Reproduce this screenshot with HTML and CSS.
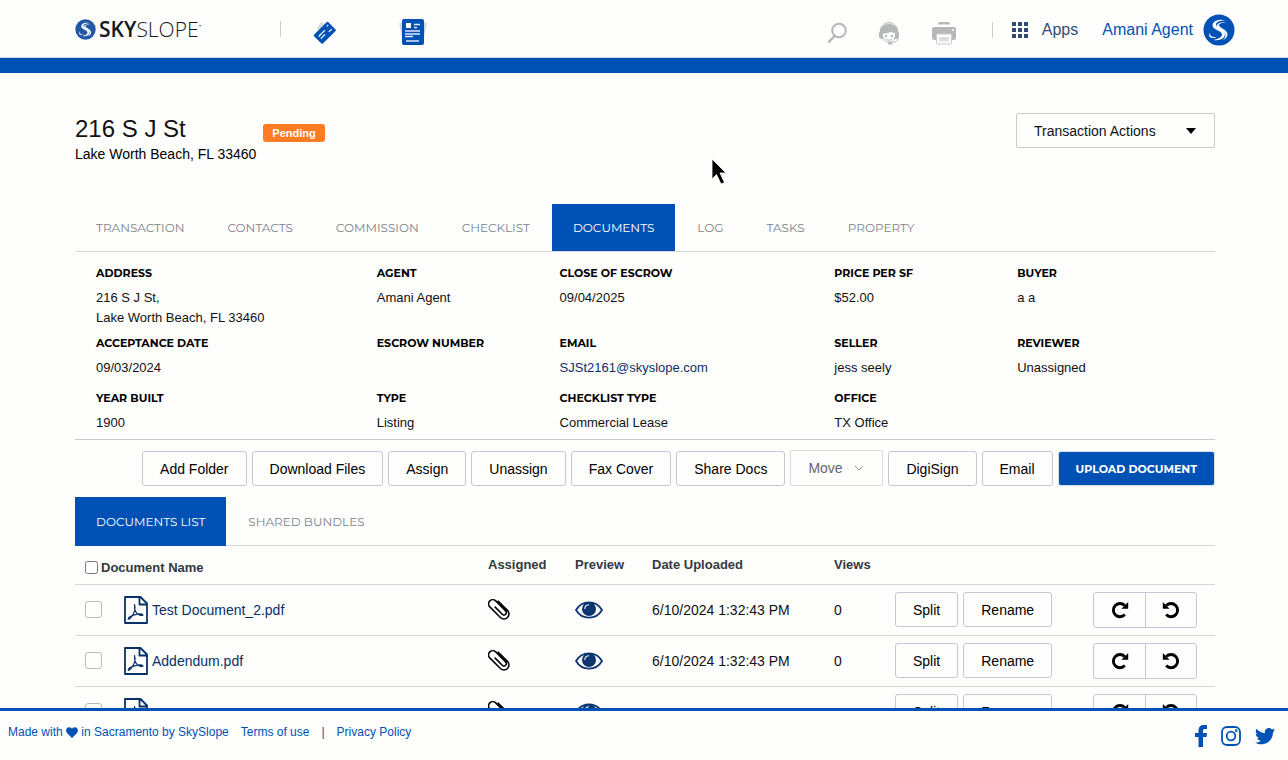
FILE: index.html
```html
<!DOCTYPE html>
<html lang="en">
<head>
    <meta charset="UTF-8">
    <meta name="viewport" content="width=device-width, initial-scale=1.0">
    <title>SkySlope - 216 S J St</title>
    <link rel="stylesheet" href="styles.css">
</head>
<body>
    <!-- Shared icons -->
    <svg class="sprite" aria-hidden="true">
        <symbol id="logo" viewBox="0 0 32 32">
            <circle cx="16" cy="16" r="15.5" fill="currentColor"/>
            <path d="M22.5 6.5C16 4.500 9.500 7 9.500 11.500c0 4.500 9.500 5 9.500 9 0 2.500-3.500 4.500-8.500 5.500 6.500 1 11.500-1.500 11.500-6 0-5-8.500-5.500-9-9.500-.2-2.500 4-4.200 9.500-4z" fill="#fff"/>
            <path d="M23.500 8.500c-4 0-7.500.8-7.500 2.700 0 2.300 8.500 4.300 8.500 9.300 0 2.500-2 4.500-4.500 5.500 1.500-1.500 2.500-3 2.500-5 0-4.500-8.500-5.500-8.500-9.300 0-2.700 5-4.200 9.500-3.200z" fill="#fff"/>
            <path d="M7 18.500c-.5 3 1.500 5 6.500 4.500-2 1.200-6 1.500-7-.5-.6-1.300-.3-2.700.5-4z" fill="#fff"/>
        </symbol>
        <symbol id="pdf" viewBox="0 0 24 28">
            <path d="M1 1h15.500L23 7.500V27H1zM15.500 1v7.500H23" fill="none" stroke="currentColor" stroke-width="1.800" stroke-linejoin="round"/>
            <path d="M10.500 8.500c1 3.500.3 7-1.500 10-1.500 2.700-3.500 5-4.800 4.600.2-1.600 3-3.400 6.300-4.300 3.500-1 7.500-1.300 8.500.2-2 1.200-5.500-.5-7-2.800-1.300-2-1.800-4.500-1.500-7.700z" fill="none" stroke="currentColor" stroke-width="1.200" stroke-linejoin="round"/>
        </symbol>
        <symbol id="clip" viewBox="0 0 22 24">
            <g transform="translate(11 11) rotate(-45)" fill="none" stroke="currentColor" stroke-width="1.600" stroke-linecap="round">
                <path d="M5-6V7a5 5 0 0 1-10 0V-8a4.200 4.200 0 0 1 8.400 0V6a2.400 2.400 0 0 1-4.800 0V-4"/>
            </g>
        </symbol>
        <symbol id="eye" viewBox="0 0 28 18">
            <path d="M1 9C7 -1.200 21-1.200 27 9 21 19.200 7 19.200 1 9z" fill="none" stroke="currentColor" stroke-width="1.800"/>
            <circle cx="14" cy="8" r="7" fill="currentColor"/>
            <path d="M9.800 7.500c.2-2.200 1.600-3.600 3.800-3.800" fill="none" stroke="#fff" stroke-width="1.100" stroke-linecap="round"/>
        </symbol>
        <symbol id="rotate" viewBox="0 0 18 18">
            <path d="M13.800 13.600A6.600 6.600 0 1 1 13.700 4.500" fill="none" stroke="currentColor" stroke-width="2.900"/>
            <path d="M17.200 1v6.800h-6.800z" fill="currentColor"/>
        </symbol>
    </svg>

    <header class="header">
        <a class="brand" href="#" aria-label="SkySlope">
            <svg class="brand-mark"><use href="#logo"/></svg>
            <span class="brand-name"><b>SKY</b>SLOPE<sup>•</sup></span>
        </a>
        <nav class="main-nav">
            <a href="#" aria-label="Listings">
                <svg width="26" height="26" viewBox="0 0 26 26">
                    <path d="M5 9l4-6 8 4-8 8z" fill="#d8dadd"/>
                    <g transform="rotate(-45 13 14)">
                        <rect x="3" y="7.500" width="20" height="12.500" rx="1" fill="#0051b5"/>
                        <path d="M6 12h9M6 15h6" stroke="#fff" stroke-width="1.200"/>
                        <path d="M16.500 16h4" stroke="#fff" stroke-width="1.200"/>
                        <path d="M19 10.500h2" stroke="#fff" stroke-width="1"/>
                    </g>
                </svg>
            </a>
            <a href="#" aria-label="Transactions">
                <svg width="28" height="28" viewBox="0 0 28 28">
                    <path d="M0 5l5-1 3 20-4 1zM28 5l-5-1-3 20 4 1z" fill="#d3d9e2"/>
                    <rect x="3" y="1" width="22" height="26" rx="2" fill="#0051b5"/>
                    <path d="M7 5h5v5H7z" fill="#fff"/>
                    <path d="M15 6.500h6M15 9.500h3M6 13h15M6 16h15M6 18.500h8M7 23h13" stroke="#dbe7f7" stroke-width="1.300"/>
                </svg>
            </a>
        </nav>
        <div class="tools">
            <a href="#" aria-label="Search">
                <svg width="20" height="22" viewBox="0 0 20 22" fill="none" stroke="#b5b7b9">
                    <circle cx="12" cy="8.500" r="6.800" stroke-width="2"/>
                    <path d="M7.500 14L1.500 20.500" stroke-width="2.500"/>
                </svg>
            </a>
            <a href="#" aria-label="Support">
                <svg width="22" height="24" viewBox="0 0 22 24">
                    <path d="M2 10a9 9 0 0 1 18 0l1 2v4l-2 2H3l-2-2v-4z" fill="#b5b7b9"/>
                    <path d="M4.500 12c4 0 7-.5 8.500-2 1 1 2.500 1.500 4.500 2 .5 5.500-2.500 9-6.500 9s-7-3.500-6.500-9z" fill="#fff" stroke="#b5b7b9"/>
                    <circle cx="8" cy="15" r="1.200" fill="#b5b7b9"/>
                    <circle cx="14" cy="15" r="1.200" fill="#b5b7b9"/>
                    <path d="M8 18c2 1.500 4 1.500 6 0M20 16c0 4-3 6-7 6" fill="none" stroke="#b5b7b9"/>
                    <path d="M3.500 5.500C8 1.500 14 1.500 18.500 5.500" fill="none" stroke="#e8e9ea"/>
                    <rect x="10" y="21" width="4" height="2.500" rx="1" fill="#b5b7b9"/>
                </svg>
            </a>
            <a href="#" aria-label="Print">
                <svg width="26" height="24" viewBox="0 0 26 24">
                    <path d="M7 3.500V2.500Q7 1 9 1h8q2 0 2 1.500v1z" fill="#b5b7b9"/>
                    <rect x="1" y="6" width="24" height="13" rx="2" fill="#b5b7b9"/>
                    <circle cx="22" cy="9" r="1" fill="#fff"/>
                    <rect x="5.500" y="13" width="15" height="10" rx="1" fill="#fff" stroke="#c9cbcd"/>
                    <path d="M8 16h10v4.500H8z" fill="#dcddde"/>
                </svg>
            </a>
            <span class="divider"></span>
            <a class="apps" href="#">
                <svg width="16" height="16" viewBox="0 0 16 16" fill="#2f4b73">
                    <path d="M0 0h4v4H0zM6 0h4v4H6zM12 0h4v4h-4zM0 6h4v4H0zM6 6h4v4H6zM12 6h4v4h-4zM0 12h4v4H0zM6 12h4v4H6zM12 12h4v4h-4z"/>
                </svg>
                Apps
            </a>
            <a class="account" href="#">Amani Agent <svg class="avatar"><use href="#logo"/></svg></a>
        </div>
    </header>

    <main class="content">
        <div class="container">
            <section class="title-bar">
                <div>
                    <h1>216 S J St</h1>
                    <p>Lake Worth Beach, FL 33460</p>
                </div>
                <span class="status">Pending</span>
                <div class="select-box actions">
                    <select aria-label="Transaction Actions">
                        <option>Transaction Actions</option>
                    </select>
                    <svg width="10" height="6" viewBox="0 0 10 6"><path d="M0 0h10L5 6z" fill="#000"/></svg>
                </div>
            </section>

            <nav class="tabs">
                <a href="#">TRANSACTION</a>
                <a href="#">CONTACTS</a>
                <a href="#">COMMISSION</a>
                <a href="#">CHECKLIST</a>
                <a class="active" href="#">DOCUMENTS</a>
                <a href="#">LOG</a>
                <a href="#">TASKS</a>
                <a href="#">PROPERTY</a>
            </nav>

            <dl class="details">
                <div><dt>ADDRESS</dt><dd>216 S J St,<br>Lake Worth Beach, FL 33460</dd></div>
                <div><dt>AGENT</dt><dd>Amani Agent</dd></div>
                <div><dt>CLOSE OF ESCROW</dt><dd>09/04/2025</dd></div>
                <div><dt>PRICE PER SF</dt><dd>$52.00</dd></div>
                <div><dt>BUYER</dt><dd>a a</dd></div>
                <div><dt>ACCEPTANCE DATE</dt><dd>09/03/2024</dd></div>
                <div><dt>ESCROW NUMBER</dt><dd></dd></div>
                <div><dt>EMAIL</dt><dd><a href="#">SJSt2161@skyslope.com</a></dd></div>
                <div><dt>SELLER</dt><dd>jess seely</dd></div>
                <div><dt>REVIEWER</dt><dd>Unassigned</dd></div>
                <div><dt>YEAR BUILT</dt><dd>1900</dd></div>
                <div><dt>TYPE</dt><dd>Listing</dd></div>
                <div><dt>CHECKLIST TYPE</dt><dd>Commercial Lease</dd></div>
                <div><dt>OFFICE</dt><dd>TX Office</dd></div>
            </dl>

            <div class="toolbar">
                <button class="btn" type="button">Add Folder</button>
                <button class="btn" type="button">Download Files</button>
                <button class="btn" type="button">Assign</button>
                <button class="btn" type="button">Unassign</button>
                <button class="btn" type="button">Fax Cover</button>
                <button class="btn" type="button">Share Docs</button>
                <div class="select-box move">
                    <select aria-label="Move">
                        <option>Move</option>
                    </select>
                    <svg width="10" height="6" viewBox="0 0 10 6"><path d="M1 1l4 4 4-4" fill="none" stroke="#999"/></svg>
                </div>
                <button class="btn" type="button">DigiSign</button>
                <button class="btn" type="button">Email</button>
                <button class="btn btn-primary" type="button">UPLOAD DOCUMENT</button>
            </div>

            <nav class="tabs list-tabs">
                <a class="active" href="#">DOCUMENTS LIST</a>
                <a href="#">SHARED BUNDLES</a>
            </nav>

            <table class="documents">
                <colgroup>
                    <col class="col-name"><col class="col-assigned"><col class="col-preview"><col class="col-date"><col class="col-views"><col class="col-edit"><col class="col-rotate">
                </colgroup>
                <thead>
                    <tr>
                        <th><label class="check-all"><input type="checkbox"> Document Name</label></th>
                        <th>Assigned</th>
                        <th>Preview</th>
                        <th>Date Uploaded</th>
                        <th>Views</th>
                        <th></th>
                        <th></th>
                    </tr>
                </thead>
                <tbody>
                    <tr>
                        <td>
                            <div class="doc">
                                <input type="checkbox" aria-label="Select Test Document_2.pdf">
                                <a href="#"><svg class="pdf"><use href="#pdf"/></svg>Test Document_2.pdf</a>
                            </div>
                        </td>
                        <td><svg class="clip"><use href="#clip"/></svg></td>
                        <td><svg class="eye"><use href="#eye"/></svg></td>
                        <td>6/10/2024 1:32:43 PM</td>
                        <td>0</td>
                        <td><div class="row-buttons"><button class="btn" type="button">Split</button><button class="btn" type="button">Rename</button></div></td>
                        <td><div class="rotate-group"><button type="button" aria-label="Rotate right"><svg><use href="#rotate"/></svg></button><button type="button" aria-label="Rotate left"><svg class="flip"><use href="#rotate"/></svg></button></div></td>
                    </tr>
                    <tr>
                        <td>
                            <div class="doc">
                                <input type="checkbox" aria-label="Select Addendum.pdf">
                                <a href="#"><svg class="pdf"><use href="#pdf"/></svg>Addendum.pdf</a>
                            </div>
                        </td>
                        <td><svg class="clip"><use href="#clip"/></svg></td>
                        <td><svg class="eye"><use href="#eye"/></svg></td>
                        <td>6/10/2024 1:32:43 PM</td>
                        <td>0</td>
                        <td><div class="row-buttons"><button class="btn" type="button">Split</button><button class="btn" type="button">Rename</button></div></td>
                        <td><div class="rotate-group"><button type="button" aria-label="Rotate right"><svg><use href="#rotate"/></svg></button><button type="button" aria-label="Rotate left"><svg class="flip"><use href="#rotate"/></svg></button></div></td>
                    </tr>
                    <tr>
                        <td>
                            <div class="doc">
                                <input type="checkbox" aria-label="Select document">
                                <a href="#" aria-label="Document"><svg class="pdf"><use href="#pdf"/></svg></a>
                            </div>
                        </td>
                        <td><svg class="clip"><use href="#clip"/></svg></td>
                        <td><svg class="eye"><use href="#eye"/></svg></td>
                        <td></td>
                        <td></td>
                        <td><div class="row-buttons"><button class="btn" type="button">Split</button><button class="btn" type="button">Rename</button></div></td>
                        <td><div class="rotate-group"><button type="button" aria-label="Rotate right"><svg><use href="#rotate"/></svg></button><button type="button" aria-label="Rotate left"><svg class="flip"><use href="#rotate"/></svg></button></div></td>
                    </tr>
                </tbody>
            </table>
        </div>
    </main>

    <footer class="footer">
        <div class="footer-links">
            <span>Made with <svg width="12" height="11" viewBox="0 0 12 11"><path d="M6 11L1 6C-1.500 3 1.500-1.500 5 .8L6 1.800 7 .8C10.500-1.500 13.500 3 11 6z" fill="#0051b5"/></svg> in Sacramento by SkySlope</span>
            <a href="#">Terms of use</a>
            <span>|</span>
            <a href="#">Privacy Policy</a>
        </div>
        <div class="social">
            <a href="#" aria-label="Facebook">
                <svg width="12" height="22" viewBox="0 0 12 22"><path d="M3.500 22V12H0V8h3.500V5.500C3.500 2 5.500 0 9 0h3v4h-2C8.500 4 8 4.500 8 6v2h4l-.5 4H8v10z" fill="#0051b5"/></svg>
            </a>
            <a href="#" aria-label="Instagram">
                <svg width="20" height="20" viewBox="0 0 20 20" fill="none" stroke="#0051b5" stroke-width="1.800">
                    <rect x="1" y="1" width="18" height="18" rx="5"/>
                    <circle cx="10" cy="10" r="4.300"/>
                    <circle cx="15.300" cy="4.700" r=".5"/>
                </svg>
            </a>
            <a href="#" aria-label="Twitter">
                <svg width="20" height="17" viewBox="0 0 20 17"><path d="M20 2c-.7.400-1.400.6-2.100.7C18.700 2.200 19.200 1.400 19.500.4c-.8.500-1.600.8-2.600 1A4.100 4.100 0 0 0 9.900 5.200C6.500 5 3.500 3.400 1.400.8.300 2.700.8 5.100 2.700 6.300 2 6.300 1.400 6.100.8 5.800c0 2 1.400 3.700 3.300 4.100-.6.200-1.200.2-1.900.1.500 1.600 2 2.800 3.800 2.800C4.400 14.100 2.200 14.800 0 14.500c7.500 4.800 18-.1 18-10.200.8-.6 1.500-1.400 2-2.300z" fill="#0051b5"/></svg>
            </a>
        </div>
    </footer>

    <svg class="cursor" width="18" height="28" viewBox="0 0 18 28"><path d="M1 1v20l4.500-4.500 4.500 9.500 3.500-1.500-4.500-9.500H15z" fill="#000" stroke="#fff" stroke-width=".8"/></svg>
</body>
</html>
```

FILE: styles.css
```css
* {
    margin: 0;
    padding: 0;
    box-sizing: border-box;
}

body {
    font-family: "Helvetica Neue", "Liberation Sans", Arial, sans-serif;
    font-size: 13px;
    line-height: 20px;
    color: #111;
    background: #fefefd;
    height: 100vh;
    display: flex;
    flex-direction: column;
    position: relative;
    overflow: hidden;
}

a {
    color: #0a3068;
    text-decoration: none;
}

svg {
    display: block;
    flex: none;
}

.sprite {
    position: absolute;
    width: 0;
    height: 0;
}

/* Header */
.header {
    display: flex;
    align-items: center;
    height: 73px;
    padding: 0 53px 0 75px;
    border-bottom: 15px solid #0051b5;
    box-shadow: inset 0 -1px #d4dae3;
    flex: none;
}

.brand {
    display: flex;
    align-items: center;
    gap: 3px;
    width: 206px;
    color: #16181c;
    border-right: 1px solid #ccc;
    height: 16px;
}

.brand-mark {
    width: 21px;
    height: 21px;
    color: #2257a5;
}

.brand-name {
    font-family: "Open Sans", "Noto Sans", sans-serif;
    font-size: 21px;
    font-weight: 300;
}

.brand-name b {
    font-weight: 600;
}

.brand-name sup {
    font-size: 8px;
    vertical-align: top;
    line-height: 12px;
}

.main-nav {
    display: flex;
    align-items: center;
    gap: 61px;
    margin-left: 31px;
    padding-top: 6px;
}

.tools {
    display: flex;
    align-items: center;
    margin-left: auto;
    gap: 31px;
    padding-top: 1px;
}

.tools > a:not([class]) {
    padding-top: 6px;
}

.divider {
    width: 1px;
    height: 16px;
    margin-left: 4px;
    background: #ccc;
}

.apps,
.account {
    display: flex;
    align-items: center;
    font-size: 16px;
}

.apps {
    gap: 14px;
    margin-left: -12px;
    color: #2f4b73;
}

.account {
    gap: 10px;
    margin-left: -7px;
    color: #0051b5;
}

.avatar {
    width: 32px;
    height: 32px;
}

/* Content */
.content {
    flex: 1;
    min-height: 0;
    overflow-y: auto;
    scrollbar-width: none;
}

.container {
    padding: 0 73px 0 75px;
}

.title-bar {
    display: flex;
    align-items: flex-start;
    height: 131px;
    padding-top: 40px;
}

h1 {
    font-size: 24px;
    line-height: 32px;
    font-weight: 400;
}

.title-bar p {
    font-size: 14px;
    line-height: 18px;
    color: #000;
}

.status {
    margin: 11px 0 0 7px;
    padding: 0 9px;
    background: #ff7b24;
    color: #fff;
    border-radius: 3px;
    font-size: 11px;
    line-height: 18px;
    font-weight: 700;
}

.select-box {
    position: relative;
}

.select-box select {
    appearance: none;
    width: 100%;
    height: 35px;
    padding: 0 17px;
    border: 1px solid #c9cacc;
    border-radius: 2px;
    background: #fefefd;
    color: #111;
    font-family: inherit;
    font-size: 14px;
}

.select-box svg {
    position: absolute;
    right: 19px;
    top: 15px;
    pointer-events: none;
}

.actions {
    width: 199px;
    margin-left: auto;
}

.move {
    width: 93px;
}

.move select {
    height: 36px;
    border-color: #dcdcdc;
    color: #666;
}

.tabs {
    display: flex;
    gap: 1px;
    border-bottom: 1px solid #d5d7db;
}

.tabs a {
    padding: 0 21px;
    font-family: Montserrat, sans-serif;
    font-size: 12px;
    font-weight: 400;
    line-height: 47px;
    color: #7d838a;
}

.tabs .active {
    background: #0051b5;
    color: #fff;
}

.details {
    display: grid;
    grid-template-columns: 281fr 183fr 275fr 183fr 177fr;
    grid-template-rows: auto 55px auto;
    padding: 11px 21px 1px;
    border-bottom: 1px solid #c9cbd0;
}

.details > div {
    padding-bottom: 5px;
}

dt {
    font-family: Montserrat, sans-serif;
    font-size: 11px;
    font-weight: 700;
    line-height: 20px;
    margin-bottom: 5px;
    color: #000;
}

dd {
    min-height: 20px;
}

.toolbar {
    display: flex;
    align-items: flex-end;
    justify-content: flex-end;
    gap: 5px;
    padding: 10px 0 11px;
}

.btn {
    height: 35px;
    padding: 0 17px;
    border: 1px solid #c5c8d1;
    border-radius: 3px;
    background: #fefefd;
    color: #000;
    font-family: inherit;
    font-size: 14px;
    cursor: pointer;
}

.btn-primary {
    border-color: #d5deea;
    background: #0051b5;
    color: #fff;
    font-family: Montserrat, sans-serif;
    font-size: 11px;
    font-weight: 700;
}

.list-tabs a {
    margin-bottom: -1px;
    line-height: 49px;
}

/* Documents table */
.documents {
    width: 100%;
    table-layout: fixed;
    border-collapse: collapse;
}

.col-name { width: 413px; }
.col-assigned { width: 87px; }
.col-preview { width: 77px; }
.col-date { width: 182px; }
.col-views { width: 61px; }
.col-edit { width: 198px; }

th {
    height: 38px;
    text-align: left;
    font-weight: 700;
    color: #333940;
    border-bottom: 1px solid #d5d7db;
}

td {
    height: 51px;
    font-size: 14px;
    border-bottom: 1px solid #d5d7db;
}

.check-all {
    display: flex;
    align-items: center;
    gap: 3px;
    padding: 6px 0 0 10px;
}

.check-all input {
    width: 13px;
    height: 13px;
}

.doc {
    display: flex;
    align-items: center;
    gap: 22px;
    padding-left: 10px;
}

.doc input {
    appearance: none;
    width: 17px;
    height: 17px;
    border: 1px solid #b9bbbe;
    border-radius: 3px;
}

.doc a {
    display: flex;
    align-items: center;
    gap: 4px;
}

.pdf {
    width: 24px;
    height: 28px;
}

.clip {
    width: 22px;
    height: 24px;
    color: #000;
}

.eye {
    width: 28px;
    height: 18px;
    color: #0d3670;
}

.row-buttons {
    display: flex;
    gap: 5px;
}

.rotate-group {
    display: inline-flex;
    vertical-align: middle;
    border: 1px solid #c5c8d1;
    border-radius: 3px;
}

.rotate-group button {
    display: flex;
    align-items: center;
    justify-content: center;
    width: 51px;
    height: 34px;
    border: 0;
    background: none;
    color: #000;
    cursor: pointer;
}

.rotate-group button + button {
    border-left: 1px solid #c5c8d1;
}

.rotate-group svg {
    width: 18px;
    height: 18px;
}

.flip {
    transform: scaleX(-1);
}

/* Footer */
.footer {
    display: flex;
    justify-content: space-between;
    height: 52px;
    padding: 11px 13px 0 8px;
    border-top: 3px solid #0051b5;
    background: #fefefd;
    color: #0051b5;
    font-size: 12px;
    flex: none;
}

.footer a {
    color: #0051b5;
}

.footer-links {
    display: flex;
    gap: 12px;
}

.footer-links svg {
    display: inline-block;
    vertical-align: middle;
}

.social {
    display: flex;
    align-items: center;
    gap: 14px;
    height: 28px;
}

.cursor {
    position: absolute;
    left: 711px;
    top: 158px;
}
```
